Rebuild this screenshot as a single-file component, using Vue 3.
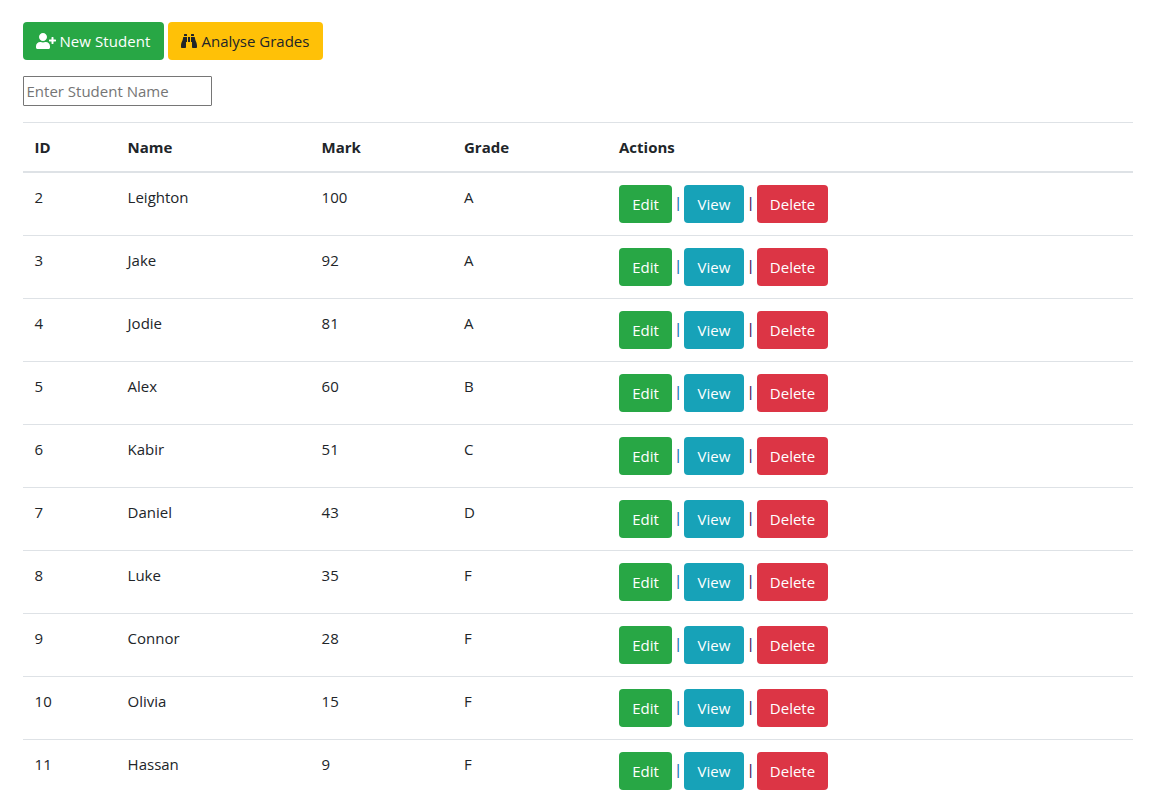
<script setup>
const students = [
  { id: 2, name: 'Leighton', mark: 100, grade: 'A' },
  { id: 3, name: 'Jake', mark: 92, grade: 'A' },
  { id: 4, name: 'Jodie', mark: 81, grade: 'A' },
  { id: 5, name: 'Alex', mark: 60, grade: 'B' },
  { id: 6, name: 'Kabir', mark: 51, grade: 'C' },
  { id: 7, name: 'Daniel', mark: 43, grade: 'D' },
  { id: 8, name: 'Luke', mark: 35, grade: 'F' },
  { id: 9, name: 'Connor', mark: 28, grade: 'F' },
  { id: 10, name: 'Olivia', mark: 15, grade: 'F' },
  { id: 11, name: 'Hassan', mark: 9, grade: 'F' },
]
</script>

<template>
  <main class="page">
    <div class="toolbar">
      <button class="btn green new" type="button">
        <svg class="icon-user" viewBox="0 0 640 512" fill="currentColor"><path d="M624 208h-64v-64c0-8.800-7.200-16-16-16h-32c-8.800 0-16 7.200-16 16v64h-64c-8.800 0-16 7.200-16 16v32c0 8.800 7.200 16 16 16h64v64c0 8.800 7.200 16 16 16h32c8.800 0 16-7.200 16-16v-64h64c8.800 0 16-7.200 16-16v-32c0-8.800-7.200-16-16-16zm-400 48c70.700 0 128-57.300 128-128S294.700 0 224 0 96 57.300 96 128s57.300 128 128 128zm89.600 32h-16.700c-22.200 10.200-46.900 16-72.900 16s-50.600-5.800-72.900-16h-16.700C60.200 288 0 348.200 0 422.400V464c0 26.500 21.500 48 48 48h352c26.500 0 48-21.500 48-48v-41.600c0-74.200-60.200-134.400-134.400-134.400z" /></svg>
        <span>New Student</span>
      </button>
      <button class="btn amber analyse" type="button">
        <svg class="icon-bino" viewBox="0 0 512 512" fill="currentColor"><path d="M416 48c0-8.840-7.160-16-16-16h-64c-8.840 0-16 7.160-16 16v48h96V48zM63.910 159.990C61.400 253.840 3.460 274.220 0 404v44c0 17.670 14.330 32 32 32h96c17.670 0 32-14.330 32-32V288h32V128H95.840c-17.630 0-31.450 14.370-31.930 31.990zm384.180 0c-.480-17.620-14.300-31.990-31.930-31.990H320v160h32v160c0 17.670 14.330 32 32 32h96c17.670 0 32-14.330 32-32v-44c-3.460-129.780-61.400-150.160-63.910-244.010zM176 32h-64c-8.840 0-16 7.160-16 16v48h96V48c0-8.840-7.160-16-16-16zm48 256h64V128h-64v160z" /></svg>
        <span>Analyse Grades</span>
      </button>
    </div>
    <input class="search" type="text" placeholder="Enter Student Name" />
    <div class="table">
      <div class="row head">
        <span>ID</span><span>Name</span><span>Mark</span><span>Grade</span><span>Actions</span>
      </div>
      <div v-for="s in students" :key="s.id" class="row">
        <span>{{ s.id }}</span>
        <span>{{ s.name }}</span>
        <span>{{ s.mark }}</span>
        <span>{{ s.grade }}</span>
        <div class="actions">
          <button class="btn green edit" type="button">Edit</button>
          <span class="sep blue">|</span>
          <button class="btn teal view" type="button">View</button>
          <span class="sep purple">|</span>
          <button class="btn red delete" type="button">Delete</button>
        </div>
      </div>
    </div>
  </main>
</template>

<style>
body {
  background: #fff;
  overflow: hidden;
}
</style>

<style scoped>
.page {
  box-sizing: border-box;
  height: 808px;
  overflow: hidden;
  padding: 22px 34px 0 23px;
  font-family: "Open Sans", "Noto Sans", sans-serif;
  font-size: 15px;
  line-height: 24px;
  color: #212529;
}
.toolbar {
  display: flex;
  gap: 4px;
}
.btn {
  display: flex;
  align-items: center;
  justify-content: center;
  box-sizing: border-box;
  height: 38px;
  padding: 0;
  border: 0;
  border-radius: 4px;
  font: inherit;
  color: #fff;
  white-space: nowrap;
}
.green { background: #28a745; }
.amber { background: #ffc107; color: #212529; }
.teal { background: #17a2b8; }
.red { background: #dc3545; }
.new,
.analyse {
  justify-content: flex-start;
  gap: 4px;
  padding-left: 12.5px;
}
.new { width: 141px; }
.analyse { width: 155px; gap: 5px; }
.icon-user { width: 20px; height: 16px; }
.icon-bino { width: 16px; height: 16px; }
.new span { letter-spacing: 0.06px; }
.search {
  display: block;
  box-sizing: border-box;
  width: 189px;
  height: 30px;
  margin: 16px 0;
  padding: 1px 2.5px;
  border: 1px solid #767676;
  border-radius: 1px;
  font: inherit;
}
.search::placeholder { color: #757575; }
.row {
  display: grid;
  grid-template-columns: 93px 194px 142.400px 155px 1fr;
  box-sizing: border-box;
  height: 63px;
  padding: 12px 0 0 11.600px;
  border-top: 1px solid #dee2e6;
}
.head {
  height: 51px;
  border-bottom: 2px solid #dee2e6;
  font-weight: 700;
}
.head + .row {
  height: 62px;
  border-top: 0;
}
.actions {
  display: flex;
  align-items: center;
  height: 38px;
}
.edit { width: 53px; }
.view { width: 60px; }
.delete { width: 71px; }
.sep {
  width: 12px;
  padding-bottom: 3px;
  font-weight: 600;
  font-size: 14px;
  text-align: center;
}
.sep.purple { width: 13px; }
.blue { color: #1c74b8; }
.purple { color: #4b1f66; }
</style>
